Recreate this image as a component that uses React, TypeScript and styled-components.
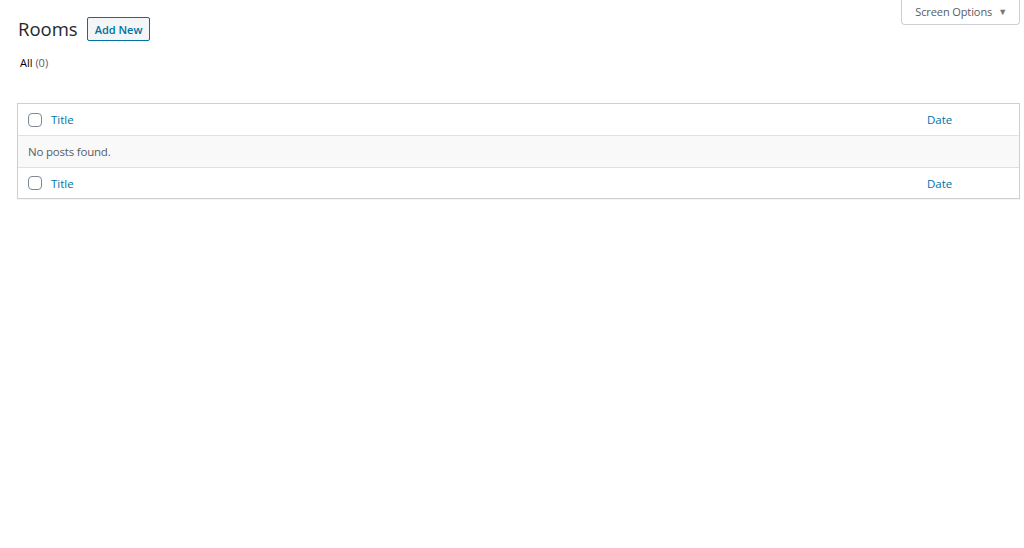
import React from "react";
import styled, { createGlobalStyle } from "styled-components";

const GlobalStyle = createGlobalStyle`
    html, body {
        margin: 0;
        padding: 0;
        background: #ffffff;
        font-family: "Open Sans", "Liberation Sans", sans-serif;
        font-size: 12px;
        color: #444;
    }
`;

const Page = styled.div`
    width: 1024px;
    height: 548px;
    padding: 0 4px 0 17px;
    box-sizing: border-box;
`;

const TopBar = styled.div`
    display: flex;
    justify-content: flex-end;
    height: 0;
`;

const ScreenOptionsButton = styled.button`
    display: flex;
    align-items: center;
    gap: 6px;
    height: 26px;
    padding: 0 12px 0 13px;
    margin-top: -1px;
    background: #fff;
    border: 1px solid #ccd0d4;
    border-top: none;
    border-radius: 0 0 4px 4px;
    font-family: inherit;
    font-size: 11px;
    letter-spacing: -0.1px;
    color: #555d66;
    cursor: pointer;
`;

const Arrow = styled.span`
    font-size: 9px;
    color: #72777c;
`;

const Heading = styled.div`
    display: flex;
    align-items: center;
    gap: 9px;
    padding-top: 17px;
`;

const Title = styled.h1`
    margin: 0 0 0 1px;
    font-size: 18.5px;
    font-weight: 400;
    color: #23282d;
    line-height: 24px;
`;

const AddNewButton = styled.a`
    display: inline-flex;
    align-items: center;
    height: 22px;
    padding: 0 7px;
    border: 1px solid #0071a1;
    border-radius: 2px;
    background: #f3f5f6;
    color: #0071a1;
    font-size: 11px;
    font-weight: 600;
    text-decoration: none;
`;

const Subsubsub = styled.div`
    margin-top: 13px;
    padding-left: 3px;
    font-size: 11px;
    line-height: 17px;
    color: #000;
`;

const Count = styled.span`
    color: #555d66;
`;

const Table = styled.div`
    margin-top: 32px;
    border: 1px solid #ccd0d4;
    box-shadow: 0 1px 1px rgba(0, 0, 0, 0.04);
`;

const Row = styled.div<{ $shaded?: boolean; $top?: boolean; $height?: number }>`
    display: flex;
    align-items: center;
    height: ${(p) => p.$height ?? 31}px;
    padding: 0 10px;
    background: ${(p) => (p.$shaded ? "#f9f9f9" : "#fff")};
    border-top: ${(p) => (p.$top ? "1px solid #e1e1e1" : "none")};
`;

const Checkbox = styled.span`
    width: 12px;
    height: 12px;
    border: 1px solid #7e8993;
    border-radius: 4px;
    background: #fff;
    margin-right: 9px;
    flex-shrink: 0;
`;

const HeadLink = styled.a<{ $date?: boolean }>`
    color: #0073aa;
    text-decoration: none;
    font-size: 11.5px;
    ${(p) => (p.$date ? "margin-left: auto; width: 82px;" : "flex: 1;")}
`;

const EmptyText = styled.span`
    font-size: 11.5px;
    letter-spacing: -0.2px;
    color: #555d66;
`;

const HeaderRow: React.FC<{ footer?: boolean }> = ({ footer }) => (
    <Row $top={footer} $height={footer ? 30 : 31}>
        <Checkbox />
        <HeadLink href="#">Title</HeadLink>
        <HeadLink href="#" $date>
            Date
        </HeadLink>
    </Row>
);

const App: React.FC = () => {
    return (
        <>
            <GlobalStyle />
            <Page>
                <TopBar>
                    <ScreenOptionsButton>
                        Screen Options <Arrow>▼</Arrow>
                    </ScreenOptionsButton>
                </TopBar>
                <Heading>
                    <Title>Rooms</Title>
                    <AddNewButton href="#">Add New</AddNewButton>
                </Heading>
                <Subsubsub>
                    All <Count>(0)</Count>
                </Subsubsub>
                <Table>
                    <HeaderRow />
                    <Row $shaded $top>
                        <EmptyText>No posts found.</EmptyText>
                    </Row>
                    <HeaderRow footer />
                </Table>
            </Page>
        </>
    );
};

export default App;
